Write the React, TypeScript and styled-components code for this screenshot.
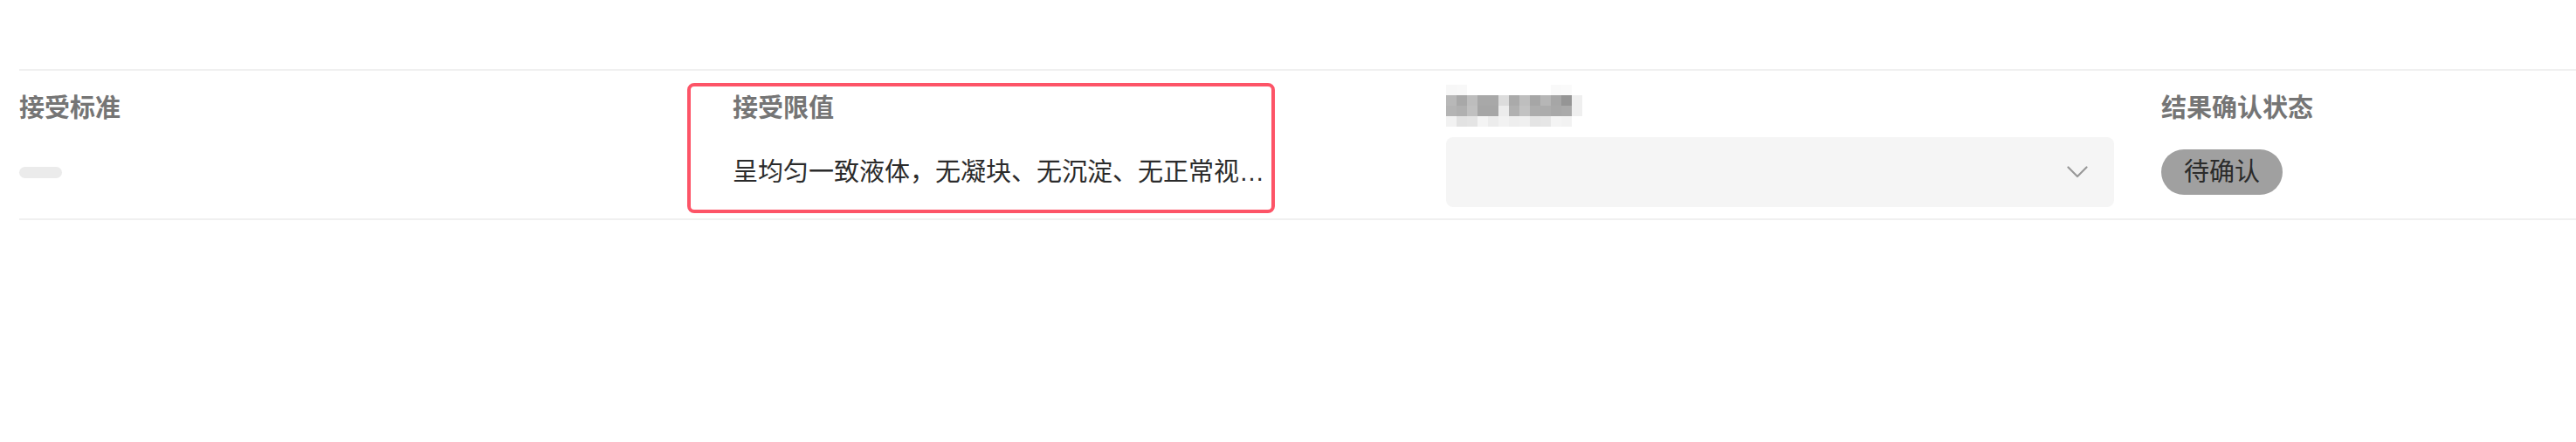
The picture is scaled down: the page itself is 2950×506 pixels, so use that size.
import styled, { createGlobalStyle } from 'styled-components';

const GlobalStyle = createGlobalStyle`
  html, body {
    margin: 0;
    padding: 0;
    background: #ffffff;
  }
  body {
    font-family: "Liberation Sans", "Noto Sans CJK SC", sans-serif;
  }
`;

const Page = styled.div`
  padding: 79px 0 0 22px;
  min-height: 506px;
  box-sizing: border-box;
`;

const Table = styled.div`
  display: grid;
  grid-template-columns: 817px 817px 819px 1fr;
  border-top: 2px solid #f0f0f0;
  border-bottom: 2px solid #f0f0f0;
`;

const Cell = styled.div<{ $highlighted?: boolean }>`
  position: relative;
  display: flex;
  flex-direction: column;
  gap: 16px;
  padding: 20px 0 13px;
  min-width: 0;

  ${({ $highlighted }) =>
    $highlighted &&
    `
    &::before {
      content: '';
      position: absolute;
      top: 14px;
      bottom: 6px;
      left: -52px;
      width: 673px;
      box-sizing: border-box;
      border: 4px solid #fd5467;
      border-radius: 8px;
      pointer-events: none;
    }
  `}
`;

const HeaderLabel = styled.div`
  height: 40px;
  display: flex;
  align-items: center;
  font-size: 29px;
  font-weight: 700;
  color: #757575;
  white-space: nowrap;
`;

const Body = styled.div`
  height: 80px;
  display: flex;
  align-items: center;
  min-width: 0;
`;

const Placeholder = styled.span`
  display: block;
  width: 49px;
  height: 13px;
  border-radius: 7px;
  background: #ebebeb;
`;

const Ellipsis = styled.span`
  display: block;
  max-width: 620px;
  font-size: 29px;
  line-height: 40px;
  color: #2b2b2b;
  white-space: nowrap;
  overflow: hidden;
  text-overflow: ellipsis;
`;

const SelectBox = styled.div`
  width: 765px;
  height: 80px;
  box-sizing: border-box;
  display: flex;
  align-items: center;
  justify-content: flex-end;
  padding-right: 30px;
  border-radius: 8px;
  background: #f5f5f5;
`;

const StatusPill = styled.span`
  display: inline-block;
  height: 52px;
  line-height: 52px;
  padding: 0 26px;
  border-radius: 26px;
  background: #a0a0a0;
  color: #2b2b2b;
  font-size: 29px;
  white-space: nowrap;
`;

// pixelated (redacted) header label
const mosaic: string[][] = [
  ['#f7f7f7', '#f8f8f8', '#fff', '#fff', '#fff', '#fff', '#fff', '#fff', '#fff', '#fff', '#f9f9f9', '#fafafa', '#fff'],
  ['#b8b8b8', '#a8a8a8', '#bdbdbd', '#a8a8a8', '#a8a8a8', '#dcdcdc', '#aaaaaa', '#bebebe', '#a6a6a6', '#b6b6b6', '#a6a6a6', '#959595', '#efefef'],
  ['#b4b4b4', '#b0b0b0', '#c0c0c0', '#a6a6a6', '#a6a6a6', '#ececec', '#b0b0b0', '#c2c2c2', '#adadad', '#acacac', '#a8a8a8', '#aaaaaa', '#efefef'],
  ['#f2f2f2', '#e2e2e2', '#e4e4e4', '#f4f4f4', '#ececec', '#f2f2f2', '#eeeeee', '#f0f0f0', '#e4e4e4', '#e6e6e6', '#f4f4f4', '#f2f2f2', '#fff'],
];

function Mosaic() {
  return (
    <svg width="156" height="48" viewBox="0 0 156 48" aria-hidden="true">
      {mosaic.map((row, r) =>
        row.map((fill, c) => (
          <rect key={`${r}-${c}`} x={c * 12} y={r * 12} width="12" height="12" fill={fill} />
        ))
      )}
    </svg>
  );
}

function Chevron() {
  return (
    <svg width="24" height="14" viewBox="0 0 24 14" fill="none" aria-hidden="true">
      <path d="M1.5 1.5 L12 12 L22.5 1.5" stroke="#999999" strokeWidth="2.2" strokeLinecap="round" strokeLinejoin="round" />
    </svg>
  );
}

export default function App() {
  return (
    <>
      <GlobalStyle />
      <Page>
        <Table>
          <Cell>
            <HeaderLabel>接受标准</HeaderLabel>
            <Body>
              <Placeholder />
            </Body>
          </Cell>
          <Cell $highlighted>
            <HeaderLabel>接受限值</HeaderLabel>
            <Body>
              <Ellipsis>呈均匀一致液体，无凝块、无沉淀、无正常视…</Ellipsis>
            </Body>
          </Cell>
          <Cell>
            <HeaderLabel>
              <Mosaic />
            </HeaderLabel>
            <Body>
              <SelectBox>
                <Chevron />
              </SelectBox>
            </Body>
          </Cell>
          <Cell>
            <HeaderLabel>结果确认状态</HeaderLabel>
            <Body>
              <StatusPill>待确认</StatusPill>
            </Body>
          </Cell>
        </Table>
      </Page>
    </>
  );
}
